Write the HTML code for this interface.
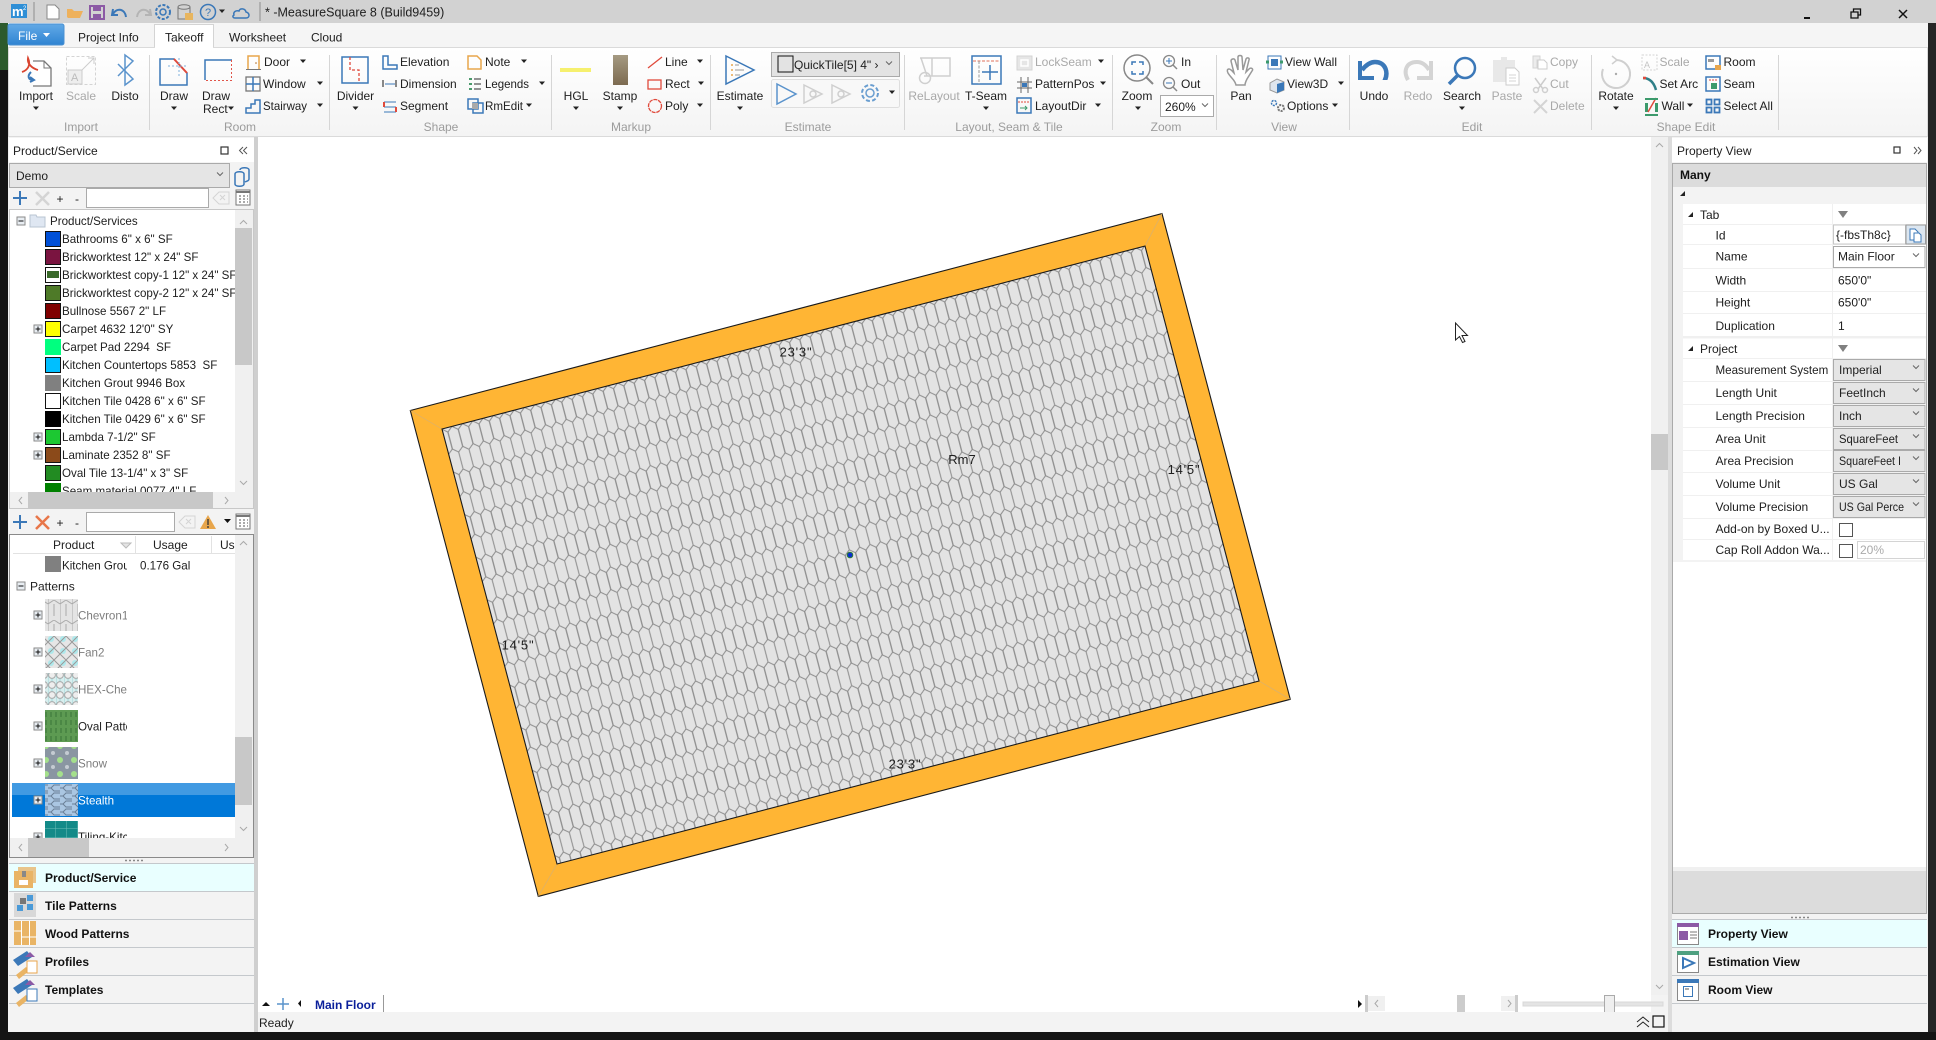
<!DOCTYPE html>
<html lang="en">
<head>
<meta charset="utf-8">
<title>MeasureSquare 8</title>
<style>
html,body{margin:0;padding:0;background:#141414;width:1936px;height:1040px;overflow:hidden}
svg{display:block}
text{font-family:"Liberation Sans",sans-serif;font-size:12px;fill:#202020}
text.n{font-size:11.6px}
.g{fill:#a9a9a9}
.l{fill:#9c9c9c}
.m{text-anchor:middle}
.b{font-weight:bold;fill:#111}
.t{fill:#7d7d7d}
.s,.r,.o,.d,.k{fill:none}
.s:not([stroke]){stroke:#3b78b8}
.r:not([stroke]){stroke:#e04a3c}
.o:not([stroke]){stroke:#e8a64c}
.d:not([stroke]){stroke:#cfcfcf}
.k:not([stroke]){stroke:#777}
.s:not([stroke-width]),.o:not([stroke-width]),.d:not([stroke-width]){stroke-width:1.5}
.r:not([stroke-width]){stroke-width:1.3}
.k:not([stroke-width]){stroke-width:1.2}
</style>
</head>
<body>
<svg xmlns="http://www.w3.org/2000/svg" width="1936" height="1040" viewBox="0 0 1936 1040">
<defs>
<linearGradient id="rib" x1="0" y1="0" x2="0" y2="1"><stop offset="0" stop-color="#ffffff"/><stop offset="1" stop-color="#f4f4f4"/></linearGradient>
<linearGradient id="fil" x1="0" y1="0" x2="0" y2="1"><stop offset="0" stop-color="#62a9e6"/><stop offset="1" stop-color="#2f84d2"/></linearGradient>
<linearGradient id="stp" x1="0" y1="0" x2="0" y2="1"><stop offset="0" stop-color="#a59a82"/><stop offset="1" stop-color="#7c6a50"/></linearGradient>
<pattern id="hex" width="10.7" height="44" patternUnits="userSpaceOnUse" patternTransform="translate(444.2 428.4) rotate(-14.67)">
<rect width="10.7" height="44" fill="#e3e3e3"/>
<g fill="none" stroke="#8a8a8a" stroke-width="1">
<path d="M8.025 0L2.675 4.500V22L8.025 26.500L13.375 22V4.500L8.025 0M8.025 26.500V44"/>
<path transform="translate(-10.7 0)" d="M8.025 0L2.675 4.500V22L8.025 26.500L13.375 22V4.500L8.025 0M8.025 26.500V44"/>
</g>
</pattern>
<pattern id="pc" width="12" height="20" patternUnits="userSpaceOnUse"><rect width="12" height="20" fill="#e4e4e4"/><path d="M0 0V20M6 4V16M0 4L6 0L12 4" stroke="#aaa" fill="none"/></pattern>
<pattern id="pf" width="12" height="12" patternUnits="userSpaceOnUse"><rect width="12" height="12" fill="#e6e6e6"/><circle cx="3" cy="3" r="3" fill="#aee9ec"/><path d="M0 6L6 0L12 6L6 12Z" fill="none" stroke="#999"/></pattern>
<pattern id="ph" width="8" height="10" patternUnits="userSpaceOnUse"><rect width="8" height="10" fill="#d8eeee"/><path d="M0 0V10M4 0V10" stroke="#9fd6d8"/><circle cx="4" cy="5" r="3.4" fill="#eee" stroke="#aaa"/></pattern>
<pattern id="po" width="5" height="8" patternUnits="userSpaceOnUse"><rect width="5" height="8" fill="#5d9a52"/><path d="M1 0V5" stroke="#3f7a3c" stroke-width="1.2"/></pattern>
<pattern id="ps" width="14" height="14" patternUnits="userSpaceOnUse"><rect width="14" height="14" fill="#8a96a2"/><circle cx="4" cy="4" r="3" fill="#a4e08c"/><circle cx="11" cy="11" r="2" fill="#c4cbd2"/></pattern>
<pattern id="pt" width="12" height="8" patternUnits="userSpaceOnUse"><rect width="12" height="8" fill="#aac6e2"/><path d="M0 4h3l3-3h6M0 4h3l3 3h6" stroke="#6a7f96" fill="none"/></pattern>
<pattern id="pk" width="11" height="9" patternUnits="userSpaceOnUse"><rect width="11" height="9" fill="#138a88"/><path d="M0 0H11M0 0V9" stroke="#6ebdb9"/></pattern>
<clipPath id="c1"><rect x="10" y="210" width="225" height="282"/></clipPath>
<clipPath id="c2"><rect x="10" y="556" width="117" height="282"/></clipPath>
<clipPath id="c3"><rect x="10" y="555" width="225" height="283"/></clipPath>
<clipPath id="c4"><rect x="1350" y="50" width="90" height="30"/></clipPath>
<path id="a" d="M-3-1.5h6l-3 3.5z" fill="#222"/>
<path id="v" d="M-3-1.5L0 1.5L3-1.5" fill="none" stroke="#666" stroke-width="1"/>
<g id="pb"><rect x="-4" y="-4" width="8" height="8" fill="#e8edf2" stroke="#8a8a8a"/><path d="M-2.5 0h5M0-2.5v5" stroke="#111"/></g>
<g id="mb"><rect x="-4" y="-4" width="8" height="8" fill="#e8edf2" stroke="#8a8a8a"/><path d="M-2.5 0h5" stroke="#111"/></g>
</defs>

<!-- Window background -->
<rect width="1936" height="1040" fill="#141414"/>
<rect x="0" y="23" width="8" height="47" fill="#2c5a2c"/>
<rect x="1928" y="23" width="8" height="1009" fill="#262626"/>
<rect x="8" y="23" width="1920" height="1009" fill="#f3f3f3"/>

<!-- Title bar -->
<rect width="1936" height="23" fill="#d2d2d2"/>
<rect x="11" y="4" width="16" height="14" fill="#2f8fd6"/>
<text x="12" y="16" style="font-weight:bold;font-size:13px;fill:#fff">m</text>
<text x="23" y="10" style="font-size:6px;fill:#fff">2</text>
<path d="M34 2V21M260 2V21" stroke="#8f8f8f"/>
<path d="M47 5h8l4 4v10H47z" fill="#fff" stroke="#888"/>
<path d="M67 17V9h5l2 2h9l-3 7H68z" fill="#eeb15c"/>
<path d="M90 6h14v13H90z" fill="none" stroke="#8c5aa5" stroke-width="2"/><rect x="93" y="6" width="8" height="5" fill="#8c5aa5"/><rect x="93" y="14" width="8" height="5" fill="#8c5aa5"/>
<path d="M113 9l-1 6h6M113 14c4-7 12-5 13 3" class="s" stroke-width="2"/>
<path d="M150 9l1 6h-6M150 14c-4-7-12-5-13 3" class="d" stroke="#b4b4b4" stroke-width="2"/>
<circle cx="163" cy="12" r="3" class="s"/><circle cx="163" cy="12" r="7" class="s" stroke-dasharray="3 1.6" stroke-width="2"/>
<path d="M178 7c0-3 12-3 12 0v12h-12zM178 7c0 3 12 3 12 0" fill="none" stroke="#777"/><rect x="185" y="13" width="8" height="7" fill="#e8b55e"/>
<circle cx="208" cy="12" r="7.5" class="s"/><text x="205" y="16" style="font-size:11px;fill:#3b78b8">?</text>
<use href="#a" x="222" y="11"/>
<path d="M235 18h11c4 0 4-5 0-6c-1-4-6-4-7-1c-3-1-6 1-5 4c-2 1-1 3 1 3z" class="s"/>
<text x="265" y="16.5" style="font-size:12.5px">* -MeasureSquare 8 (Build9459)</text>
<path d="M1804 18h6" stroke="#111" stroke-width="2"/>
<path d="M1851 12h7v6h-7zM1853.500 12V9h7v6h-2" fill="none" stroke="#111" stroke-width="1.300"/>
<path d="M1899 10l8 8M1907 10l-8 8" stroke="#111" stroke-width="1.500"/>

<!-- Tabs -->
<rect x="8" y="23" width="1920" height="24" fill="#f5f5f5"/>
<rect x="8" y="24" width="56" height="21" rx="2" fill="url(#fil)" stroke="#4a91d2"/>
<text x="18" y="40" style="fill:#fff">File</text>
<path d="M43 33h7l-3.500 4z" fill="#fff"/>
<text x="78" y="41.500">Project Info</text>
<rect x="154.500" y="24.500" width="59" height="24" fill="#fff" stroke="#d4d4d4"/>
<text x="165" y="41.500">Takeoff</text>
<text x="229" y="41.500">Worksheet</text>
<text x="311" y="41.500">Cloud</text>

<!-- Ribbon -->
<rect x="8.500" y="47.500" width="1919" height="89" fill="url(#rib)" stroke="#dadada"/>
<rect x="155" y="47" width="58" height="2" fill="#fff"/>
<path d="M149.500 55V130M329.500 55V130M551.500 55V130M710.500 55V130M904.500 55V130M1112.500 55V130M1216.500 55V130M1349.500 55V130M1591.500 55V130M1778.500 55V130" stroke="#d6d6d6"/>
<text class="l m" x="81" y="131">Import</text><text class="l m" x="240" y="131">Room</text><text class="l m" x="441" y="131">Shape</text><text class="l m" x="631" y="131">Markup</text><text class="l m" x="808" y="131">Estimate</text><text class="l m" x="1009" y="131">Layout, Seam &amp; Tile</text><text class="l m" x="1166" y="131">Zoom</text><text class="l m" x="1284" y="131">View</text><text class="l m" x="1472" y="131">Edit</text><text class="l m" x="1686" y="131">Shape Edit</text>

<!-- Import -->
<path d="M33 61h11l7 7v18H33" fill="#fff" stroke="#777" stroke-width="1.300"/>
<path d="M44 61v7h7" fill="none" stroke="#777"/>
<path d="M22 72c6-2 9-7 6-14c-1 5 3 10 10 12" fill="none" stroke="#d9442f" stroke-width="1.800"/>
<path d="M31 72c-4 4-3 8 3 8M30 77l4 3-4 2" class="s" stroke-width="2"/>
<text class="m" x="36" y="100">Import</text><use href="#a" x="36" y="108"/>
<!-- Scale -->
<rect x="66.500" y="56.500" width="29" height="28" fill="none" stroke="#d4d4d4" stroke-dasharray="3 2"/>
<path d="M82 70l12-12M88 58h6v6" stroke="#ccc" fill="none"/><rect x="68" y="70" width="14" height="14" fill="#eee" stroke="#ccc"/><text x="71" y="81" style="font-size:11px;fill:#bbb">A</text>
<text class="m g" x="81" y="100">Scale</text>
<!-- Disto -->
<path d="M118 64l15 15-8 6V55l8 6-15 15" class="s" stroke="#5a93cc"/>
<text class="m" x="125" y="100">Disto</text>
<!-- Draw -->
<path d="M160 59h14l13 14v12h-27z" fill="none" stroke="#3b78b8" stroke-width="1.500"/>
<path d="M174 59l13 14" stroke="#e04a3c" stroke-width="2"/><path d="M168 66h20M179 58v20" stroke="#7eb0dc" stroke-dasharray="2 2"/>
<text class="m" x="174" y="100">Draw</text><use href="#a" x="174" y="108"/>
<!-- Draw rect -->
<path d="M205 80V60h27" fill="none" stroke="#3b78b8" stroke-width="1.500"/>
<path d="M231.500 60v20.500H205" fill="none" stroke="#e0554a" stroke-dasharray="2 2"/>
<text class="m" x="216" y="100">Draw</text><text x="203" y="113">Rect</text><use href="#a" x="231" y="108"/>
<!-- Door etc -->
<path d="M248 69V56h11v13" class="o"/><path d="M246 69.500h15" stroke="#777"/><circle cx="256" cy="63" r=".8" fill="#b06a20"/>
<text x="264" y="66">Door</text><use href="#a" x="303" y="61"/>
<rect x="246" y="77" width="14" height="14" fill="none" stroke="#777" stroke-width="1.300"/><path d="M253 77v14M246 84h14" stroke="#3b78b8" stroke-width="1.500"/>
<text x="263" y="88">Window</text><use href="#a" x="320" y="83"/>
<path d="M246 113v-5h5v-4h4v-4h5v13z" class="s"/>
<text x="263" y="110" textLength="44" lengthAdjust="spacingAndGlyphs">Stairway</text><use href="#a" x="320" y="105"/>
<!-- Divider -->
<rect x="342" y="57" width="26" height="26" class="s"/><path d="M350 57v13h9v13" class="r" stroke-dasharray="3 2"/>
<text class="m" x="355.500" y="100">Divider</text><use href="#a" x="355.500" y="108"/>
<path d="M383 56h5v9h9v4h-14z" class="s"/><text x="400" y="66">Elevation</text>
<path d="M383 80v7M396 80v7" stroke="#888" stroke-width="2"/><path d="M385 84h10" stroke="#3b78b8"/><text x="400" y="88">Dimension</text>
<path d="M384 102h12M384 107h12M384 112h12" stroke="#3b78b8"/><path d="M384 102v5M396 107v5" stroke="#e04a3c" stroke-width="2"/><text x="400" y="110">Segment</text>
<path d="M468 56h9l4 4v9h-13z" class="o"/><text x="485" y="66">Note</text><use href="#a" x="524" y="61"/>
<path d="M469 79h3M469 84h3M469 89h3" stroke="#4b9a6c" stroke-width="2"/><path d="M474 79h7M474 84h7M474 89h7" stroke="#555" stroke-width="1.300"/><text x="485" y="88" textLength="44" lengthAdjust="spacingAndGlyphs">Legends</text><use href="#a" x="542" y="83"/>
<rect x="468" y="99" width="10" height="10" class="s"/><rect x="473" y="103" width="10" height="10" class="s"/><rect x="472" y="103" width="6" height="6" fill="#aaa"/><text x="485" y="110" textLength="38" lengthAdjust="spacingAndGlyphs">RmEdit</text><use href="#a" x="529" y="105"/>
<!-- Markup -->
<rect x="560" y="68" width="31" height="4" fill="#f6f06e"/>
<text class="m" x="576" y="100">HGL</text><use href="#a" x="576" y="108"/>
<rect x="613" y="55" width="15" height="30" fill="url(#stp)"/>
<text class="m" x="620" y="100">Stamp</text><use href="#a" x="620" y="108"/>
<path d="M648 68l14-11" class="r"/><text x="665" y="66">Line</text><use href="#a" x="700" y="61"/>
<rect x="648" y="80" width="13" height="9" class="r"/><text x="665" y="88">Rect</text><use href="#a" x="701" y="83"/>
<circle cx="655" cy="106" r="6.500" class="r" stroke-dasharray="4 .8"/><text x="665" y="110">Poly</text><use href="#a" x="700" y="105"/>
<!-- Estimate -->
<path d="M726 56l28 14-28 14z" class="s"/><path d="M731 65h2M731 70h2M731 75h2" stroke="#e8a64c" stroke-width="1.500"/><path d="M735 65h4M735 70h9M735 75h5" stroke="#999"/>
<text class="m" x="740" y="100">Estimate</text><use href="#a" x="740" y="108"/>
<rect x="771.500" y="52.500" width="128" height="24" fill="#e3e3e3" stroke="#aaa"/>
<rect x="778" y="56" width="15" height="16" fill="#e3e3e3" stroke="#111"/>
<text x="794" y="69">QuickTile[5] 4" ›</text><use href="#v" x="889" y="63"/>
<rect x="771.500" y="79.500" width="128" height="28" rx="2" fill="#f8f8f8" stroke="#dedede"/>
<path d="M777 84l19 10-19 10z" class="s" stroke="#5a93cc"/>
<path d="M804 85l18 9-18 9z" class="d"/><circle cx="813" cy="94" r="3" class="d"/>
<path d="M832 85l18 9-18 9z" class="d"/><circle cx="841" cy="94" r="3" class="d"/>
<circle cx="870" cy="93" r="4" class="s" stroke="#6a9ed0"/><circle cx="870" cy="93" r="8" class="s" stroke="#6a9ed0" stroke-dasharray="4 2.300" stroke-width="2"/>
<use href="#a" x="892" y="92"/>
<!-- Layout -->
<path d="M920 58h30v18h-26" class="d"/><path d="M932 58v18M921 58l6 18" class="d"/><circle cx="925" cy="78" r="5.500" class="d"/>
<text class="m g" x="934" y="100">ReLayout</text>
<rect x="972" y="56" width="29" height="28" class="s"/><path d="M973 61h27" stroke="#e0705a" stroke-dasharray="3 1.500"/><path d="M979 61v23" stroke="#999" stroke-dasharray="3 1.500"/><path d="M990 65v15M982 72h16" class="s"/>
<text class="m" x="986" y="100">T-Seam</text><use href="#a" x="986" y="108"/>
<rect x="1017" y="56" width="15" height="14" fill="#e6e6e6" stroke="#d4d4d4"/><path d="M1021 60h7v6h-7z" class="d" stroke="#fff"/>
<text class="g" x="1035" y="66">LockSeam</text><use href="#a" x="1101" y="61"/>
<path d="M1021 77v16M1028 77v16M1017 82h15M1017 88h15" stroke="#666"/><rect x="1022" y="83" width="5" height="4" fill="#3b78b8"/>
<text x="1035" y="88">PatternPos</text><use href="#a" x="1103" y="83"/>
<rect x="1017" y="98" width="14" height="15" class="s"/><path d="M1018 102h12" stroke="#e04a3c" stroke-dasharray="2 1"/><path d="M1020 108h7M1025 106l2 2-2 2" stroke="#3c9a6c" fill="none"/>
<text x="1035" y="110">LayoutDir</text><use href="#a" x="1098" y="105"/>
<!-- Zoom -->
<circle cx="1137" cy="68" r="13" fill="none" stroke="#888" stroke-width="1.500"/><path d="M1146 77l7 7" stroke="#888" stroke-width="2"/>
<path d="M1132 65v-3h4M1139 62h4v3M1132 71v3h4M1139 74h4v-3" class="s"/>
<text class="m" x="1137" y="100">Zoom</text><use href="#a" x="1138" y="108"/>
<circle cx="1169" cy="61" r="5.500" fill="none" stroke="#888" stroke-width="1.300"/><path d="M1173 65l4 4" stroke="#888" stroke-width="1.500"/><path d="M1166 61h6M1169 58v6" stroke="#3b78b8"/>
<text x="1181" y="66">In</text>
<circle cx="1169" cy="83" r="5.500" fill="none" stroke="#888" stroke-width="1.300"/><path d="M1173 87l4 4" stroke="#888" stroke-width="1.500"/><path d="M1166 83h6" stroke="#3b78b8"/>
<text x="1181" y="88">Out</text>
<rect x="1160.500" y="95.500" width="53" height="21" fill="#fff" stroke="#aaa"/>
<text x="1165" y="111">260%</text><use href="#v" x="1205" y="105"/>
<!-- View -->
<path d="M1236 85c-1-5-5-7-8-12c-1-2-1-4 1-4c2 0 4 3 5 4l-3-12c0-2 3-3 4-1l3 10v-13c0-2 4-2 4 0l1 13l3-11c1-2 4-1 3 1l-3 12l3-3c2-2 5 0 3 2l-5 8c-1 2-2 4-2 6z" fill="#fff" stroke="#999" stroke-width="1.500"/>
<text class="m" x="1241" y="100">Pan</text>
<rect x="1268" y="56" width="13" height="13" fill="none" stroke="#3b78b8"/><rect x="1271" y="59" width="7" height="7" fill="#3b78b8"/><path d="M1266 62h3M1280 62h3" stroke="#3c9a6c" stroke-width="3"/>
<text x="1285" y="66">View Wall</text>
<path d="M1270 83l7-4 7 3v8l-7 3-7-3z" fill="#dfe6ee" stroke="#999"/><path d="M1277 84v9l7-3v-8z" fill="#3b78b8"/>
<text x="1287" y="88">View3D</text><use href="#a" x="1341" y="83"/>
<circle cx="1274" cy="103" r="2.500" class="s" stroke-dasharray="2 1"/><circle cx="1281" cy="108" r="3" fill="none" stroke="#777" stroke-width="2" stroke-dasharray="2 1"/>
<text x="1287" y="110">Options</text><use href="#a" x="1335" y="105"/>
<!-- Edit -->
<g clip-path="url(#c4)">
<path d="M1384 82c5-9 2-20-9-20c-5 0-9 3-13 8" fill="none" stroke="#3b78b8" stroke-width="4.500"/><path d="M1360 61v17h14" fill="none" stroke="#3b78b8" stroke-width="4"/>
</g>
<text class="m" x="1374" y="100">Undo</text>
<path d="M1408 80c-5-9-2-18 9-18c5 0 9 3 12 8" fill="none" stroke="#d4d4d4" stroke-width="4"/><path d="M1431 61v17h-14" fill="none" stroke="#d4d4d4" stroke-width="4"/>
<text class="m g" x="1418" y="100">Redo</text>
<circle cx="1465" cy="68" r="10" fill="none" stroke="#3b78b8" stroke-width="2.500"/><path d="M1458 75l-9 9" stroke="#3b78b8" stroke-width="3.500"/>
<text class="m" x="1462" y="100">Search</text><use href="#a" x="1462" y="108"/>
<path d="M1493 60h8v-3h6v3h8v22h-22z" fill="#e8e8e8"/><path d="M1506 68h9l4 4v13h-13z" fill="#fff" stroke="#ccc"/><path d="M1509 75h7M1509 78h7M1509 81h7" stroke="#d4d4d4"/>
<text class="m g" x="1507" y="100">Paste</text>
<path d="M1533 56h7v4h-3v8h-4z" fill="#ececec" stroke="#d4d4d4"/><path d="M1538 60h6l3 3v6h-9z" fill="#fff" stroke="#ccc"/><text class="g" x="1550" y="66">Copy</text>
<path d="M1535 78l8 11M1546 78l-8 11" stroke="#ccc" stroke-width="1.500"/><circle cx="1536" cy="90" r="2.500" class="d"/><circle cx="1545" cy="90" r="2.500" class="d"/><text class="g" x="1550" y="88">Cut</text>
<path d="M1534 100l13 13M1547 100l-13 13" stroke="#d4d4d4" stroke-width="2"/><text class="g" x="1550" y="110">Delete</text>
<!-- Shape Edit -->
<path d="M1616 60a14 14 0 1 1-13 9" class="d" stroke-width="2"/><path d="M1612 56l5 4-5 4" class="d"/><circle cx="1616" cy="74" r="1.200" fill="#aaa"/>
<text class="m" x="1616" y="100">Rotate</text><use href="#a" x="1616" y="108"/>
<rect x="1642" y="55" width="15" height="15" fill="none" stroke="#d4d4d4" stroke-dasharray="2 1.500"/><text x="1644" y="68" style="font-size:9px;fill:#c4c4c4">A</text>
<text class="g" x="1659.500" y="66">Scale</text>
<path d="M1643 78c7 0 11 5 13 12" fill="none" stroke="#2f7f88" stroke-width="2.500"/><path d="M1643 78h3" stroke="#e04a3c" stroke-width="2.500"/><text x="1659.500" y="88">Set Arc</text>
<path d="M1645 103h3v9h-3zM1655 103h3v9h-3z" fill="#3c9a6c"/><path d="M1648 112l8-14" stroke="#e04a3c" stroke-width="1.500"/><path d="M1645 99h13M1645 115h13" stroke="#3c9a6c" stroke-width="2"/>
<text x="1661.500" y="110">Wall</text><use href="#a" x="1690" y="105"/>
<rect x="1706" y="56" width="14" height="13" class="s"/><rect x="1708" y="59" width="6" height="3" fill="#999"/><rect x="1715" y="65" width="6" height="5" fill="#e8a64c"/>
<text x="1723.500" y="66">Room</text>
<rect x="1706" y="77" width="14" height="14" class="s"/><path d="M1709 80h8" stroke="#e04a3c" stroke-dasharray="2 1"/><rect x="1711" y="83" width="6" height="6" fill="#3c9a6c"/>
<text x="1723.500" y="88">Seam</text>
<g fill="none" stroke="#3b78b8" stroke-width="1.800"><rect x="1706.500" y="99.500" width="5" height="5"/><rect x="1714.500" y="99.500" width="5" height="5"/><rect x="1706.500" y="107.500" width="5" height="5"/><rect x="1714.500" y="107.500" width="5" height="5"/></g>
<text x="1723.500" y="110">Select All</text>

<!-- Left panel -->
<rect x="8" y="137" width="247" height="895" fill="#f3f3f3"/>
<rect x="254" y="137" width="4" height="895" fill="#cfcfcf"/>
<rect x="9" y="138" width="245" height="24" fill="#fff"/>
<text x="13" y="155">Product/Service</text>
<rect x="221" y="147" width="7" height="7" fill="none" stroke="#333" stroke-width="1.200"/>
<path d="M243 147l-3.500 3.500 3.500 3.500M247 147l-3.500 3.500 3.500 3.500" fill="none" stroke="#555"/>
<rect x="9.500" y="163.500" width="220" height="24" fill="#e5e5e5" stroke="#aaa"/>
<text x="16" y="180">Demo</text><use href="#v" x="220" y="174"/>
<path d="M235 174c0-3 9-3 9 0v10c0 3-9 3-9 0zM240 170c0-3 9-3 9 0v9c0 2-2 2-4 3" class="s"/>
<!-- toolbar 1 -->
<path d="M20 191v14M13 198h14" class="s" stroke-width="2"/>
<path d="M36 192l13 13M49 192l-13 13" stroke="#d4d4d4" stroke-width="2.500"/>
<text class="m" x="60" y="203">+</text><text class="m" x="77" y="203">-</text>
<rect x="86.500" y="188.500" width="122" height="19" fill="#fff" stroke="#aaa"/>
<path d="M213 198l6-6h10v12h-10z" fill="none" stroke="#d4d4d4"/><path d="M220 195l5 5M225 195l-5 5" stroke="#d4d4d4"/>
<rect x="236" y="190" width="14" height="15" fill="#fff" stroke="#777"/><path d="M236 192h14" stroke="#777" stroke-width="2"/><path d="M239 196h2M243 196h2M247 196h1M239 199h2M243 199h2M247 199h1M239 202h2M243 202h2M247 202h1" stroke="#555"/>
<!-- tree -->
<rect x="9.500" y="209.500" width="244" height="299" fill="#fff" stroke="#c8c8c8"/>
<use href="#mb" x="21" y="221"/>
<path d="M30 227v-12h6l1 2h8v10z" fill="#dfe7f2" stroke="#b8c4d2"/>
<text class="n" x="50" y="225">Product/Services</text>
<g clip-path="url(#c1)">
<rect x="45.500" y="231.500" width="15" height="15" fill="#0050d8" stroke="#111"/><text class="n" x="62" y="243">Bathrooms 6" x 6" SF</text>
<rect x="45.500" y="249.500" width="15" height="15" fill="#7a1440" stroke="#111"/><text class="n" x="62" y="261">Brickworktest 12" x 24" SF</text>
<rect x="45.500" y="267.500" width="15" height="15" fill="#fff" stroke="#111"/><rect x="47" y="271" width="12" height="7" fill="#3a6a2a"/><text class="n" x="62" y="279">Brickworktest copy-1 12" x 24" SF</text>
<rect x="45.500" y="285.500" width="15" height="15" fill="#4e7a28" stroke="#111"/><text class="n" x="62" y="297">Brickworktest copy-2 12" x 24" SF</text>
<rect x="45.500" y="303.500" width="15" height="15" fill="#800000" stroke="#111"/><text class="n" x="62" y="315">Bullnose 5567 2" LF</text>
<rect x="45.500" y="321.500" width="15" height="15" fill="#ffff00" stroke="#111"/><text class="n" x="62" y="333">Carpet 4632 12'0" SY</text>
<rect x="45" y="339" width="16" height="16" fill="#00ff7f"/><text class="n" x="62" y="351">Carpet Pad 2294&#160; SF</text>
<rect x="45.500" y="357.500" width="15" height="15" fill="#00bfff" stroke="#111"/><text class="n" x="62" y="369">Kitchen Countertops 5853&#160; SF</text>
<rect x="45" y="375" width="16" height="16" fill="#808080"/><text class="n" x="62" y="387">Kitchen Grout 9946 Box</text>
<rect x="45.500" y="393.500" width="15" height="15" fill="#fff" stroke="#111"/><text class="n" x="62" y="405">Kitchen Tile 0428 6" x 6" SF</text>
<rect x="45" y="411" width="16" height="16" fill="#000"/><text class="n" x="62" y="423">Kitchen Tile 0429 6" x 6" SF</text>
<rect x="45.500" y="429.500" width="15" height="15" fill="#1cc832" stroke="#111"/><text class="n" x="62" y="441">Lambda 7-1/2" SF</text>
<rect x="45.500" y="447.500" width="15" height="15" fill="#8b4a1a" stroke="#111"/><text class="n" x="62" y="459">Laminate 2352 8" SF</text>
<rect x="45.500" y="465.500" width="15" height="15" fill="#228b22" stroke="#111"/><text class="n" x="62" y="477">Oval Tile 13-1/4" x 3" SF</text>
<rect x="45" y="483" width="16" height="16" fill="#008000"/><text class="n" x="62" y="495">Seam material 0077 4" LF</text>
</g>
<use href="#pb" x="38" y="329"/><use href="#pb" x="38" y="437"/><use href="#pb" x="38" y="455"/>
<rect x="235" y="210" width="18" height="282" fill="#f0f0f0"/>
<rect x="235" y="228" width="17" height="137" fill="#c8c8c8"/>
<path d="M240 224l3.500-3.500L247 224M240 481l3.500 3.500L247 481" fill="none" stroke="#aaa"/>
<rect x="10" y="492" width="243" height="16" fill="#f0f0f0"/>
<rect x="28" y="492" width="185" height="16" fill="#c8c8c8"/>
<path d="M22 497l-3 3.500 3 3.500M225 497l3 3.500-3 3.500" fill="none" stroke="#aaa"/>
<!-- toolbar 2 -->
<path d="M20 515v14M13 522h14" class="s" stroke-width="2"/>
<path d="M36 516l13 13M49 516l-13 13" stroke="#e8764a" stroke-width="2.500"/>
<text class="m" x="60" y="527">+</text><text class="m" x="77" y="527">-</text>
<rect x="86.500" y="512.500" width="88" height="19" fill="#fff" stroke="#aaa"/>
<path d="M179 522l6-6h10v12h-10z" fill="none" stroke="#d4d4d4"/><path d="M186 519l5 5M191 519l-5 5" stroke="#d4d4d4"/>
<path d="M208 515l8 14h-16z" fill="#e8a64c"/><path d="M208 519v6M208 526v2" stroke="#333" stroke-width="1.300"/>
<path d="M224 519h7l-3.500 4z" fill="#111"/>
<rect x="236" y="514" width="14" height="15" fill="#fff" stroke="#777"/><path d="M236 516h14" stroke="#777" stroke-width="2"/><path d="M239 520h2M243 520h2M247 520h1M239 523h2M243 523h2M247 523h1M239 526h2M243 526h2M247 526h1" stroke="#555"/>
<!-- grid -->
<rect x="9.500" y="534.500" width="244" height="323" fill="#fff" stroke="#8a8a8a"/>
<text x="53" y="549">Product</text><path d="M121 543h10l-5 5z" fill="#e4e4e4" stroke="#bbb"/>
<path d="M135.500 536v17M211.500 536v17M13 553.500h222" stroke="#e2e2e2"/>
<text x="153" y="549">Usage</text>
<text x="220" y="549">Usa</text>
<g clip-path="url(#c3)">
<rect x="12" y="783" width="223" height="34" fill="#0078d8"/><rect x="12" y="783" width="223" height="12" fill="#419ae2"/>
</g>
<rect x="45" y="556" width="16" height="16" fill="#808080"/>
<g clip-path="url(#c2)">
<text class="n" x="62" y="569.500">Kitchen Grout 9946 Box</text>
<text class="t n" x="78" y="619.500">Chevron1</text>
<text class="t n" x="78" y="656.500">Fan2</text>
<text class="t n" x="78" y="693.500">HEX-Chevron</text>
<text class="n" x="78" y="730.500">Oval Pattern</text>
<text class="t n" x="78" y="767.500">Snow</text>
<text class="n" x="78" y="804.500" style="fill:#fff">Stealth</text>
<text class="n" x="78" y="841">Tiling-Kitchen</text>
</g>
<text class="n" x="140" y="569.500">0.176 Gal</text>
<use href="#mb" x="21" y="586"/><text x="30" y="590.500">Patterns</text>
<g clip-path="url(#c3)">
<rect x="45" y="599" width="33" height="32" fill="url(#pc)"/>
<rect x="45" y="636" width="33" height="32" fill="url(#pf)"/>
<rect x="45" y="673" width="33" height="32" fill="url(#ph)"/>
<rect x="45" y="710" width="33" height="32" fill="url(#po)"/>
<rect x="45" y="747" width="33" height="32" fill="url(#ps)"/>
<rect x="45" y="784" width="33" height="32" fill="url(#pt)"/>
<rect x="45" y="821" width="33" height="32" fill="url(#pk)"/>
<use href="#pb" x="38" y="615"/><use href="#pb" x="38" y="652"/><use href="#pb" x="38" y="689"/><use href="#pb" x="38" y="726"/><use href="#pb" x="38" y="763"/><use href="#pb" x="38" y="800"/><use href="#pb" x="38" y="837"/>
</g>
<rect x="235" y="535" width="18" height="303" fill="#f0f0f0"/>
<rect x="235" y="737" width="17" height="68" fill="#c8c8c8"/>
<path d="M240 545l3.500-3.500L247 545M240 827l3.500 3.500L247 827" fill="none" stroke="#aaa"/>
<rect x="10" y="838" width="243" height="19" fill="#f0f0f0"/>
<rect x="28" y="838" width="61" height="19" fill="#c8c8c8"/>
<path d="M22 844l-3 3.500 3 3.500M225 844l3 3.500-3 3.500" fill="none" stroke="#aaa"/>
<path d="M125 860.500h2M129 860.500h2M133 860.500h2M137 860.500h2M141 860.500h2" stroke="#888" stroke-width="1.500"/>
<!-- Left nav -->
<rect x="9" y="863" width="245" height="28" fill="#e9ffff"/>
<path d="M9 891.500h245M9 919.500h245M9 947.500h245M9 975.500h245M9 1003.500h245M9 863.500h245" stroke="#c4c8cc"/>
<text class="b" x="45" y="882">Product/Service</text>
<text class="b" x="45" y="910">Tile Patterns</text>
<text class="b" x="45" y="938">Wood Patterns</text>
<text class="b" x="45" y="966">Profiles</text>
<text class="b" x="45" y="994">Templates</text>
<path d="M18 867h18v16h-18z" fill="#e9c48a"/><path d="M14 871h19v17H14z" fill="#e9b465"/><rect x="22" y="871" width="4" height="6" fill="#888"/><rect x="19" y="880" width="9" height="5" fill="#fff"/>
<rect x="14" y="893" width="22" height="24" fill="#d8d8d8"/><rect x="20" y="898" width="6" height="6" fill="#777"/><rect x="27" y="904" width="6" height="6" fill="#4a9ad8"/><rect x="17" y="905" width="6" height="6" fill="#4a9ad8"/><rect x="27" y="895" width="6" height="6" fill="#4a9ad8"/>
<rect x="14" y="921" width="22" height="24" fill="#e9b465"/><path d="M21.500 921v24M29.500 921v24M14 931h7M30 937h7M22 937h8" stroke="#fff"/>
<path d="M13 960l14-9 5 6-14 9z" fill="#3b78b8"/><path d="M16 975l10-8 3 4-10 8z" fill="#e9b465"/><path d="M25 957l5-5 5 5z" fill="#8c5aa5"/><rect x="27" y="961" width="10" height="12" fill="#fff" stroke="#e9a64c"/>
<path d="M13 988l14-9 5 6-14 9z" fill="#3b78b8"/><path d="M16 1003l10-8 3 4-10 8z" fill="#e9b465"/><path d="M25 985l5-5 5 5z" fill="#8c5aa5"/><rect x="27" y="989" width="10" height="12" fill="#fff" stroke="#3b78b8"/>

<!-- Canvas -->
<rect x="258" y="137" width="1393" height="875" fill="#fff"/>
<path d="M410.300 410.500L1162 213.600L1290.300 699.300L538.300 896.400Z" fill="#ffb534" stroke="#1a1a1a" stroke-width="1.100"/>
<path d="M410.300 410.500L442 429M1162 213.600L1145 246M1290.300 699.300L1259 681M538.300 896.400L557 864" stroke="#d8b070" stroke-width=".7"/>
<path d="M442 429L1145 246L1259 681L557 864Z" fill="url(#hex)" stroke="#1a1a1a" stroke-width="1.100"/>
<text class="m" x="796" y="356.500" style="font-size:13px;letter-spacing:.8px">23'3"</text>
<text class="m" x="1184" y="474" style="font-size:13px;letter-spacing:.8px">14'5"</text>
<text class="m" x="518" y="649.500" style="font-size:13px;letter-spacing:.8px">14'5"</text>
<text class="m" x="905" y="768.500" style="font-size:13px;letter-spacing:.8px">23'3"</text>
<text class="m" x="962" y="464" style="font-size:13px">Rm7</text>
<circle cx="850" cy="555" r="2.800" fill="#0a2fd0" stroke="#2a7a3a" stroke-width="1"/>
<path d="M1455.500 323v17l4-3.500l3 6l2.500-1l-3-6h5.500z" fill="#fff" stroke="#222"/>
<!-- Canvas scrollbar -->
<rect x="1651" y="137" width="17" height="858" fill="#f0f0f0"/>
<rect x="1651" y="434" width="17" height="36" fill="#c8c8c8"/>
<path d="M1656 147l3.500-3.500L1663 147M1656 985l3.500 3.500L1663 985" fill="none" stroke="#aaa"/>
<rect x="1668" y="137" width="4" height="895" fill="#dcdcdc"/>
<!-- Canvas bottom bar -->
<path d="M262 1006l4-4 4 4z" fill="#111"/>
<path d="M283 998v12M277 1004h12" class="s" stroke="#5a93cc"/>
<path d="M301 1000v7l-3-3.500z" fill="#111"/>
<text x="315" y="1009" style="font-weight:bold;fill:#0a1f9a">Main Floor</text>
<path d="M383.500 995v17" stroke="#999"/>
<path d="M1358 1000v8l4-4z" fill="#111"/>
<rect x="1365" y="995" width="3" height="17" fill="#ccc"/><rect x="1515" y="995" width="3" height="17" fill="#ccc"/>
<rect x="1368" y="996" width="17" height="15" fill="#f0f0f0"/><rect x="1501" y="996" width="14" height="15" fill="#f0f0f0"/>
<rect x="1457" y="995" width="8" height="17" fill="#ccc"/>
<path d="M1378 1000l-3 3.500 3 3.500M1508 1000l3 3.500-3 3.500" fill="none" stroke="#aaa"/>
<rect x="1523" y="1002" width="140" height="4" fill="#e4e4e4" stroke="#d8d8d8"/>
<rect x="1604.500" y="995.500" width="10" height="17" fill="#efefef" stroke="#aaa"/>
<!-- Status bar -->
<rect x="258" y="1012" width="1410" height="20" fill="#f3f3f3"/>
<text x="259" y="1027">Ready</text>
<path d="M1637 1022l6-5 6 5M1637 1027l6-5 6 5" fill="none" stroke="#222"/>
<rect x="1653" y="1016" width="11" height="11" fill="none" stroke="#111" stroke-width="1.200"/>

<!-- Right panel -->
<rect x="1672" y="137" width="255" height="895" fill="#f3f3f3"/>
<rect x="1672" y="138" width="255" height="24" fill="#fff"/>
<text x="1677" y="155">Property View</text>
<rect x="1894" y="147" width="6" height="6" fill="none" stroke="#333" stroke-width="1.200"/>
<path d="M1914 147l3 3.500-3 3.500M1918 147l3 3.500-3 3.500" fill="none" stroke="#555"/>
<rect x="1672.500" y="163.500" width="254" height="750" fill="#fff" stroke="#aaa"/>
<rect x="1673" y="164" width="253" height="23" fill="#dcdcdc"/>
<text class="b" x="1680" y="179">Many</text>
<rect x="1673" y="187" width="253" height="17" fill="#f3f3f3"/>
<path d="M1685 191v5h-5z" fill="#222"/>
<rect x="1673" y="204" width="10" height="356" fill="#f3f3f3"/>
<rect x="1673" y="560" width="253" height="2" fill="#f3f3f3"/>
<rect x="1673" y="867" width="253" height="46" fill="#dcdcdc"/><rect x="1673" y="867" width="253" height="4" fill="#f0f0f0"/>
<!-- grid rows -->
<path d="M1683 224.500h243M1683 244.500h243M1683 268.500h243M1683 291.500h243M1683 313.500h243M1683 336.500h243M1683 358.500h243M1683 381.500h243M1683 404.500h243M1683 427.500h243M1683 450.500h243M1683 472.500h243M1683 495.500h243M1683 518.500h243M1683 539.500h243M1832.500 204v356" stroke="#f0f0f0"/>
<rect x="1683" y="336" width="243" height="2.500" fill="#f0f0f0"/>
<path d="M1693 212v5h-5z" fill="#222"/><text x="1700" y="219">Tab</text>
<path d="M1838 211h10l-5 7z" fill="#808080"/>
<text x="1715.500" y="239.500">Id</text>
<rect x="1833.500" y="225" width="72" height="19" fill="#fff" stroke="#c8c8c8"/><text x="1836" y="239">{-fbsTh8c}</text>
<rect x="1906" y="225" width="19.500" height="19" fill="#dce6f0" stroke="#999"/><path d="M1910 229h5l3 3v8h-8z" fill="#fff" stroke="#3b78b8"/><path d="M1914 233h5l2 2v7h-7z" fill="#fff" stroke="#3b78b8"/>
<text x="1715.500" y="260.500">Name</text>
<rect x="1833.500" y="246.500" width="91.500" height="21" fill="#fff" stroke="#aaa"/><text x="1838" y="260.500">Main Floor</text><use href="#v" x="1916" y="255"/>
<text x="1715.500" y="284.500">Width</text><text x="1838" y="284.500">650'0"</text>
<text x="1715.500" y="306.500">Height</text><text x="1838" y="306.500">650'0"</text>
<text x="1715.500" y="330">Duplication</text><text x="1838" y="330">1</text>
<path d="M1693 346v5h-5z" fill="#222"/><text x="1700" y="353">Project</text>
<path d="M1838 345h10l-5 7z" fill="#808080"/>
<g fill="#e5e5e5" stroke="#aaa">
<rect x="1833.500" y="359.500" width="91.500" height="21"/><rect x="1833.500" y="382.500" width="91.500" height="21"/><rect x="1833.500" y="405.500" width="91.500" height="21"/><rect x="1833.500" y="428.500" width="91.500" height="21"/><rect x="1833.500" y="450.500" width="91.500" height="21"/><rect x="1833.500" y="473.500" width="91.500" height="21"/><rect x="1833.500" y="496.500" width="91.500" height="21"/>
</g>
<text class="n" x="1715.500" y="374">Measurement System</text><text x="1839" y="374">Imperial</text><use href="#v" x="1916" y="367"/>
<text x="1715.500" y="397">Length Unit</text><text x="1839" y="397">FeetInch</text><use href="#v" x="1916" y="390"/>
<text x="1715.500" y="420">Length Precision</text><text x="1839" y="420">Inch</text><use href="#v" x="1916" y="413"/>
<text x="1715.500" y="443">Area Unit</text><text x="1839" y="443" textLength="59" lengthAdjust="spacingAndGlyphs">SquareFeet</text><use href="#v" x="1916" y="436"/>
<text x="1715.500" y="465">Area Precision</text><text x="1839" y="465" textLength="62" lengthAdjust="spacingAndGlyphs">SquareFeet I</text><use href="#v" x="1916" y="458"/>
<text x="1715.500" y="488">Volume Unit</text><text x="1839" y="488">US Gal</text><use href="#v" x="1916" y="481"/>
<text x="1715.500" y="511">Volume Precision</text><text x="1839" y="511" textLength="65" lengthAdjust="spacingAndGlyphs">US Gal Perce</text><use href="#v" x="1916" y="504"/>
<text x="1715.500" y="533">Add-on by Boxed U...</text><rect x="1839.500" y="523.500" width="13" height="13" fill="#fff" stroke="#555"/>
<text x="1715.500" y="554">Cap Roll Addon Wa...</text><rect x="1839.500" y="544.500" width="13" height="13" fill="#fff" stroke="#555"/>
<rect x="1857.500" y="541.500" width="67" height="17" fill="#fff" stroke="#d4d4d4"/><text x="1860" y="554" style="fill:#aaa">20%</text>
<path d="M1791 917.500h2M1795 917.500h2M1799 917.500h2M1803 917.500h2M1807 917.500h2" stroke="#888" stroke-width="1.500"/>
<!-- Right nav -->
<rect x="1672" y="920" width="255" height="27" fill="#e9ffff"/>
<path d="M1672 919.500h255M1672 947.500h255M1672 975.500h255M1672 1003.500h255" stroke="#c4c8cc"/>
<text class="b" x="1708" y="938">Property View</text>
<text class="b" x="1708" y="966">Estimation View</text>
<text class="b" x="1708" y="994">Room View</text>
<rect x="1677.500" y="923.500" width="21" height="21" fill="#fff" stroke="#888"/><rect x="1677" y="923" width="22" height="4" fill="#8c5aa5"/><rect x="1679" y="931" width="9" height="9" fill="#8c5aa5"/><path d="M1690 932h7M1690 935h7M1690 938h7" stroke="#777"/>
<rect x="1677.500" y="951.500" width="21" height="21" fill="#fff" stroke="#888"/><rect x="1677" y="951" width="22" height="4" fill="#4fa080"/><path d="M1683 958l11 5-11 5z" fill="none" stroke="#3b78b8" stroke-width="2"/>
<rect x="1677.500" y="979.500" width="21" height="21" fill="#fff" stroke="#888"/><rect x="1677" y="979" width="22" height="4" fill="#3b78b8"/><rect x="1683.500" y="986.500" width="9" height="10" fill="none" stroke="#3b78b8"/><rect x="1685" y="988" width="4" height="2" fill="#aaa"/>
</svg>
</body>
</html>
